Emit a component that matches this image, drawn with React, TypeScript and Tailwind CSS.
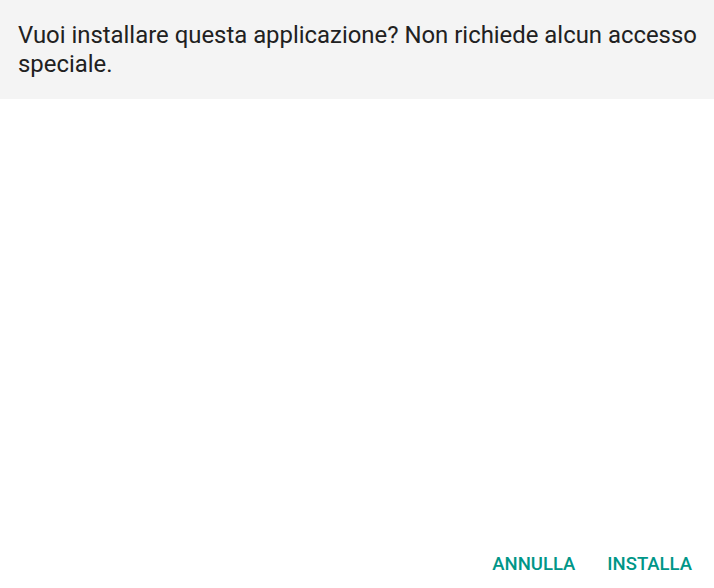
export default function App() {
  return (
    <div className="flex h-[588px] w-[714px] flex-col bg-white font-['Roboto',sans-serif]">
      <div className="h-[99px] bg-[#f4f4f4] pl-[18px] pr-[6px] pt-[21px]">
        <p className="text-[23.9px] leading-[29px] text-[#212121]">
          Vuoi installare questa applicazione? Non richiede alcun accesso speciale.
        </p>
      </div>
      <div className="flex-1" />
      <div className="flex items-center justify-end gap-[32px] pb-[14px] pr-[22px]">
        <button className="text-[18.5px] font-medium leading-[20px] text-[#009688]">ANNULLA</button>
        <button className="text-[18.5px] font-medium leading-[20px] text-[#009688]">INSTALLA</button>
      </div>
    </div>
  );
}
